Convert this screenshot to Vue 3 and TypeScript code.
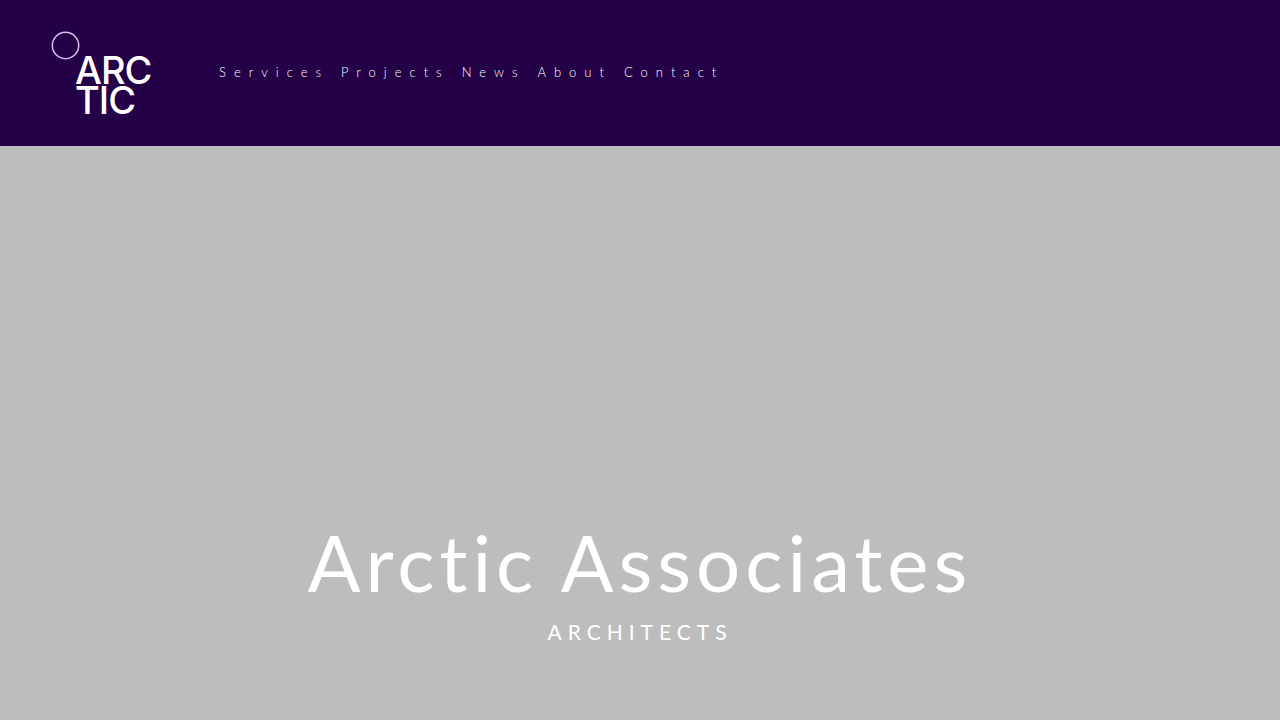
<script setup lang="ts">
interface NavLink {
  label: string
  href: string
}

const links: NavLink[] = [
  { label: 'Services', href: '#services' },
  { label: 'Projects', href: '#projects' },
  { label: 'News', href: '#news' },
  { label: 'About', href: '#about' },
  { label: 'Contact', href: '#contact' },
]
</script>

<template>
  <div class="page">
    <header class="header">
      <a class="logo" href="#home">
        <svg width="104" height="96" viewBox="0 0 104 96" role="img">
          <circle cx="15.5" cy="15.5" r="13.2" fill="none" stroke="#d9c0ec" stroke-width="1.5" />
          <text class="logo-text" x="25" y="54">ARC</text>
          <text class="logo-text" x="25" y="84">TIC</text>
        </svg>
      </a>
      <nav class="nav">
        <a v-for="link in links" :key="link.label" class="nav-link" :href="link.href">{{ link.label }}</a>
      </nav>
    </header>
    <main class="hero">
      <h1 class="title">Arctic Associates</h1>
      <p class="subtitle">ARCHITECTS</p>
    </main>
  </div>
</template>

<style>
body {
  margin: 0;
  background: #bdbdbd;
}
</style>

<style scoped>
.page {
  display: flex;
  flex-direction: column;
  min-height: 100vh;
  font-family: Lato, "Open Sans", sans-serif;
  color: #fff;
  background: #bdbdbd;
}

.header {
  display: flex;
  align-items: center;
  gap: 65px;
  padding: 30px 50px 20px;
  background: #240046;
}

.logo,
.logo svg {
  display: block;
}

.logo-text {
  font-family: Inter, "Liberation Sans", sans-serif;
  font-size: 38px;
  font-weight: 500;
  letter-spacing: -1px;
  fill: #fff;
}

.nav {
  display: flex;
  flex-wrap: wrap;
  gap: 12px;
  padding-bottom: 12px;
}

.nav-link {
  font-size: 13px;
  font-weight: 300;
  line-height: 20px;
  letter-spacing: 8px;
  color: #fff;
  text-decoration: none;
}

.hero {
  display: flex;
  flex: 1;
  flex-direction: column;
  align-items: center;
  justify-content: flex-end;
  padding: 0 24px 72px;
  text-align: center;
}

.title {
  margin: 0;
  font-size: 78px;
  font-weight: 400;
  line-height: 96px;
  letter-spacing: 5px;
}

.subtitle {
  margin: 6px 0 0;
  font-size: 21px;
  font-weight: 400;
  line-height: 32px;
  letter-spacing: 6px;
}
</style>
